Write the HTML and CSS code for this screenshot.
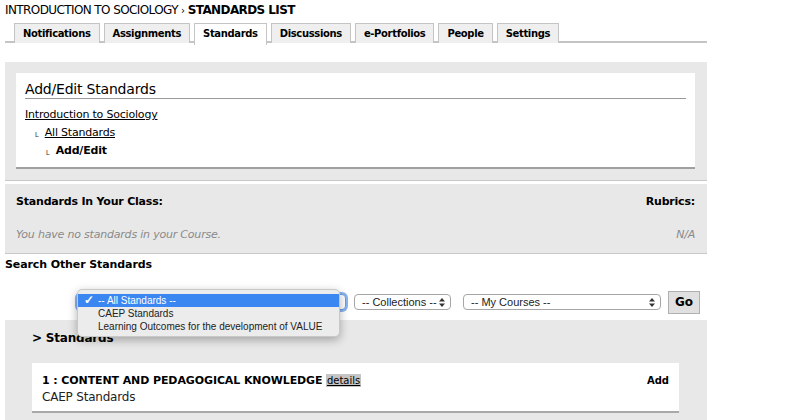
FILE: index.html
```html
<!DOCTYPE html>
<html>
<head>
<meta charset="utf-8">
<link rel="stylesheet" href="styles.css">
</head>
<body>
<div class="page">
  <div class="crumb">INTRODUCTION TO SOCIOLOGY <span class="sep">›</span> <b>STANDARDS LIST</b></div>
  <div class="tabs">
    <div class="tab">Notifications</div>
    <div class="tab">Assignments</div>
    <div class="tab active">Standards</div>
    <div class="tab">Discussions</div>
    <div class="tab">e-Portfolios</div>
    <div class="tab">People</div>
    <div class="tab">Settings</div>
  </div>

  <div class="panel p1">
    <div class="box">
      <div class="h">Add/Edit Standards</div>
      <div class="tree">
        <div class="row"><a href="#">Introduction to Sociology</a></div>
        <div class="row l1"><span class="ell">L</span><a href="#">All Standards</a></div>
        <div class="row l2"><span class="ell">L</span><b>Add/Edit</b></div>
      </div>
    </div>
  </div>

  <div class="panel p2">
    <div class="line"><b>Standards In Your Class:</b><b>Rubrics:</b></div>
    <div class="line muted"><i>You have no standards in your Course.</i><i>N/A</i></div>
  </div>

  <div class="search-title">Search Other Standards</div>

  <div class="selects">
    <div class="sel s1 focus"><span>-- All Standards --</span><svg class="arr" width="6" height="9" viewBox="0 0 6 9"><path d="M0 3.5L3 0L6 3.5Z M0 5.5L3 9L6 5.5Z" fill="#333"/></svg></div>
    <div class="sel s2"><span>-- Collections --</span><svg class="arr" width="6" height="9" viewBox="0 0 6 9"><path d="M0 3.5L3 0L6 3.5Z M0 5.5L3 9L6 5.5Z" fill="#333"/></svg></div>
    <div class="sel s3"><span>-- My Courses --</span><svg class="arr" width="6" height="9" viewBox="0 0 6 9"><path d="M0 3.5L3 0L6 3.5Z M0 5.5L3 9L6 5.5Z" fill="#333"/></svg></div>
    <div class="go">Go</div>
    <div class="popup">
      <div class="opt on"><span class="chk">✓</span>-- All Standards --</div>
      <div class="opt">CAEP Standards</div>
      <div class="opt">Learning Outcomes for the development of VALUE</div>
    </div>
  </div>

  <div class="panel p3">
    <div class="sub">&gt; Standards</div>
    <div class="card">
      <div class="card-l">
        <div><b class="title">1 : CONTENT AND PEDAGOGICAL KNOWLEDGE</b> <a href="#" class="details">details</a></div>
        <div class="coll">CAEP Standards</div>
      </div>
      <b class="add">Add</b>
    </div>
  </div>
</div>
</body>
</html>
```

FILE: styles.css
```css
* { box-sizing: border-box; }
html, body { margin: 0; padding: 0; background: #fff; }
body { font-family: "DejaVu Sans", Verdana, sans-serif; font-size: 11px; color: #000; overflow: hidden; height: 420px; }
a { color: #000; }
.page { width: 702px; margin-left: 5px; }

.crumb { font-size: 12px; line-height: 14px; padding-top: 3px; letter-spacing: -0.6px; }
.crumb .sep { font-size: 10px; }

.tabs { display: flex; gap: 4px; padding-left: 9px; margin-top: 5px; border-bottom: 2px solid #c4c4c4; height: 20px; }
.tab { height: 20px; padding: 0 8px; background: #efefef; border: 1px solid #c4c4c4; border-bottom: none; font-weight: bold; font-size: 10px; line-height: 19px; letter-spacing: -0.35px; }
.tab.active { background: #fff; height: 22px; margin-bottom: -2px; }

.panel { background: #e8e8e8; }
.p1 { margin-top: 19px; padding: 11px 12px 11px 11px; border-bottom: 1px solid #c8c8c8; }
.box { background: #fff; padding: 8px 9px 7px 9px; border-bottom: 2px solid #a0a0a0; }
.box .h { font-size: 14px; line-height: 17px; height: 18px; border-bottom: 1px solid #999; letter-spacing: -0.2px; }
.tree { margin-top: 7px; }
.tree .row { height: 18px; line-height: 18px; letter-spacing: -0.2px; }
.ell { font-size: 7px; margin-right: 6px; color: #333; font-family: "Liberation Sans", sans-serif; vertical-align: top; line-height: 22px; }
.l1 { padding-left: 10px; }
.l2 { padding-left: 21px; }

.p2 { margin-top: 3px; padding: 11px 12px 11px 11px; border-bottom: 1px solid #c8c8c8; }
.line { display: flex; justify-content: space-between; line-height: 14px; height: 14px; letter-spacing: -0.2px; }
.line.muted { color: #8a8a8a; margin-top: 19px; }

.search-title { font-weight: bold; font-size: 11px; line-height: 14px; height: 14px; margin-top: 4px; letter-spacing: -0.1px; }

.selects { position: relative; display: flex; align-items: center; height: 36px; padding-left: 72px; margin-top: 12px; }
.sel { height: 16px; border: 1px solid #a6a6a6; border-radius: 4px; background: #fff; display: flex; align-items: center; justify-content: space-between; padding: 0 5px 0 7px; font-family: "Liberation Sans", Arial, sans-serif; font-size: 11px; color: #222; }
.sel.focus { box-shadow: 0 0 0 2px #8bb4f0; border-color: #6b9be0; }
.s1 { width: 269px; }
.s2 { width: 97px; margin-left: 8px; }
.s3 { width: 198px; margin-left: 12px; }
.go { width: 32px; height: 23px; margin-left: 7px; background: #e0e0e0; border: 1px solid #b0b0b0; font-weight: bold; font-size: 12px; line-height: 21px; text-align: center; }
.popup { position: absolute; left: 72px; top: 5px; width: 263px; height: 48px; background: #ececec; border: 1px solid #c8c8c8; border-radius: 5px; box-shadow: 0 3px 10px rgba(0,0,0,0.3); padding-top: 4px; font-family: "Liberation Sans", Arial, sans-serif; font-size: 10px; color: #222; z-index: 2; }
.opt { height: 13px; line-height: 13px; padding-left: 20px; position: relative; }
.opt.on { background: #3a87f2; color: #fff; }
.chk { position: absolute; left: 6px; top: 0; font-size: 12px; font-weight: bold; }

.p3 { margin-top: 0; padding: 10px 28px 10px 27px; height: 110px; }
.sub { font-weight: bold; font-size: 12px; line-height: 16px; letter-spacing: -0.2px; }
.card { margin-top: 17px; background: #fff; border-bottom: 2px solid #a8a8a8; display: flex; justify-content: space-between; padding: 11px 10px 6px 10px; }
.title { font-size: 11px; letter-spacing: -0.1px; }
.details { background: #c4c4c4; padding: 1px 1px; font-size: 10px; }
.coll { font-size: 12px; line-height: 16px; margin-top: 2px; color: #222; letter-spacing: -0.2px; }
.add { font-size: 10px; margin-top: 1px; }
```
